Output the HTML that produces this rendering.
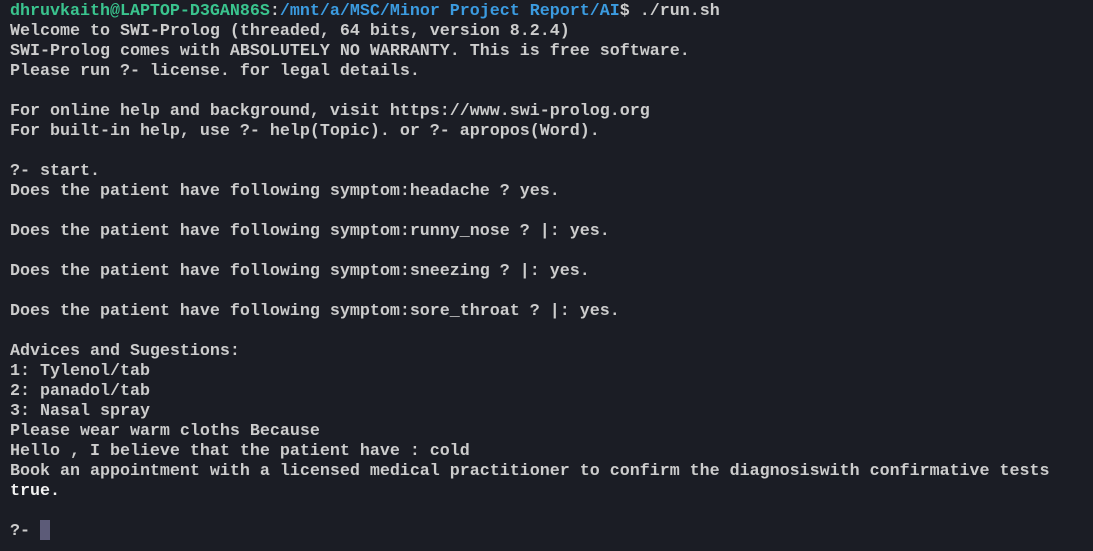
<!DOCTYPE html>
<html><head><meta charset="utf-8"><style>
html,body{margin:0;padding:0;background:#1b1d25;width:1093px;height:551px;overflow:hidden}
pre{margin:0;padding:2px 0 0 10px;font-family:"Liberation Mono",monospace;font-size:16.67px;line-height:20px;color:#cccccc;font-weight:bold}
.g{color:#3ac48e}.b{color:#3b9be0}.w{color:#f2f2f2}
.c{display:inline-block;width:10px;height:20px;background:#5c5b78;vertical-align:top;position:relative;top:-2px}
</style></head><body><pre><span class="g">dhruvkaith@LAPTOP-D3GAN86S</span>:<span class="b">/mnt/a/MSC/Minor Project Report/AI</span>$ ./run.sh
Welcome to SWI-Prolog (threaded, 64 bits, version 8.2.4)
SWI-Prolog comes with ABSOLUTELY NO WARRANTY. This is free software.
Please run ?- license. for legal details.

For online help and background, visit https://www.swi-prolog.org
For built-in help, use ?- help(Topic). or ?- apropos(Word).

?- start.
Does the patient have following symptom:headache ? yes.

Does the patient have following symptom:runny_nose ? |: yes.

Does the patient have following symptom:sneezing ? |: yes.

Does the patient have following symptom:sore_throat ? |: yes.

Advices and Sugestions:
1: Tylenol/tab
2: panadol/tab
3: Nasal spray
Please wear warm cloths Because
Hello , I believe that the patient have : cold
Book an appointment with a licensed medical practitioner to confirm the diagnosiswith confirmative tests
<span class="w">true.</span>

?- <span class="c"></span></pre></body></html>
